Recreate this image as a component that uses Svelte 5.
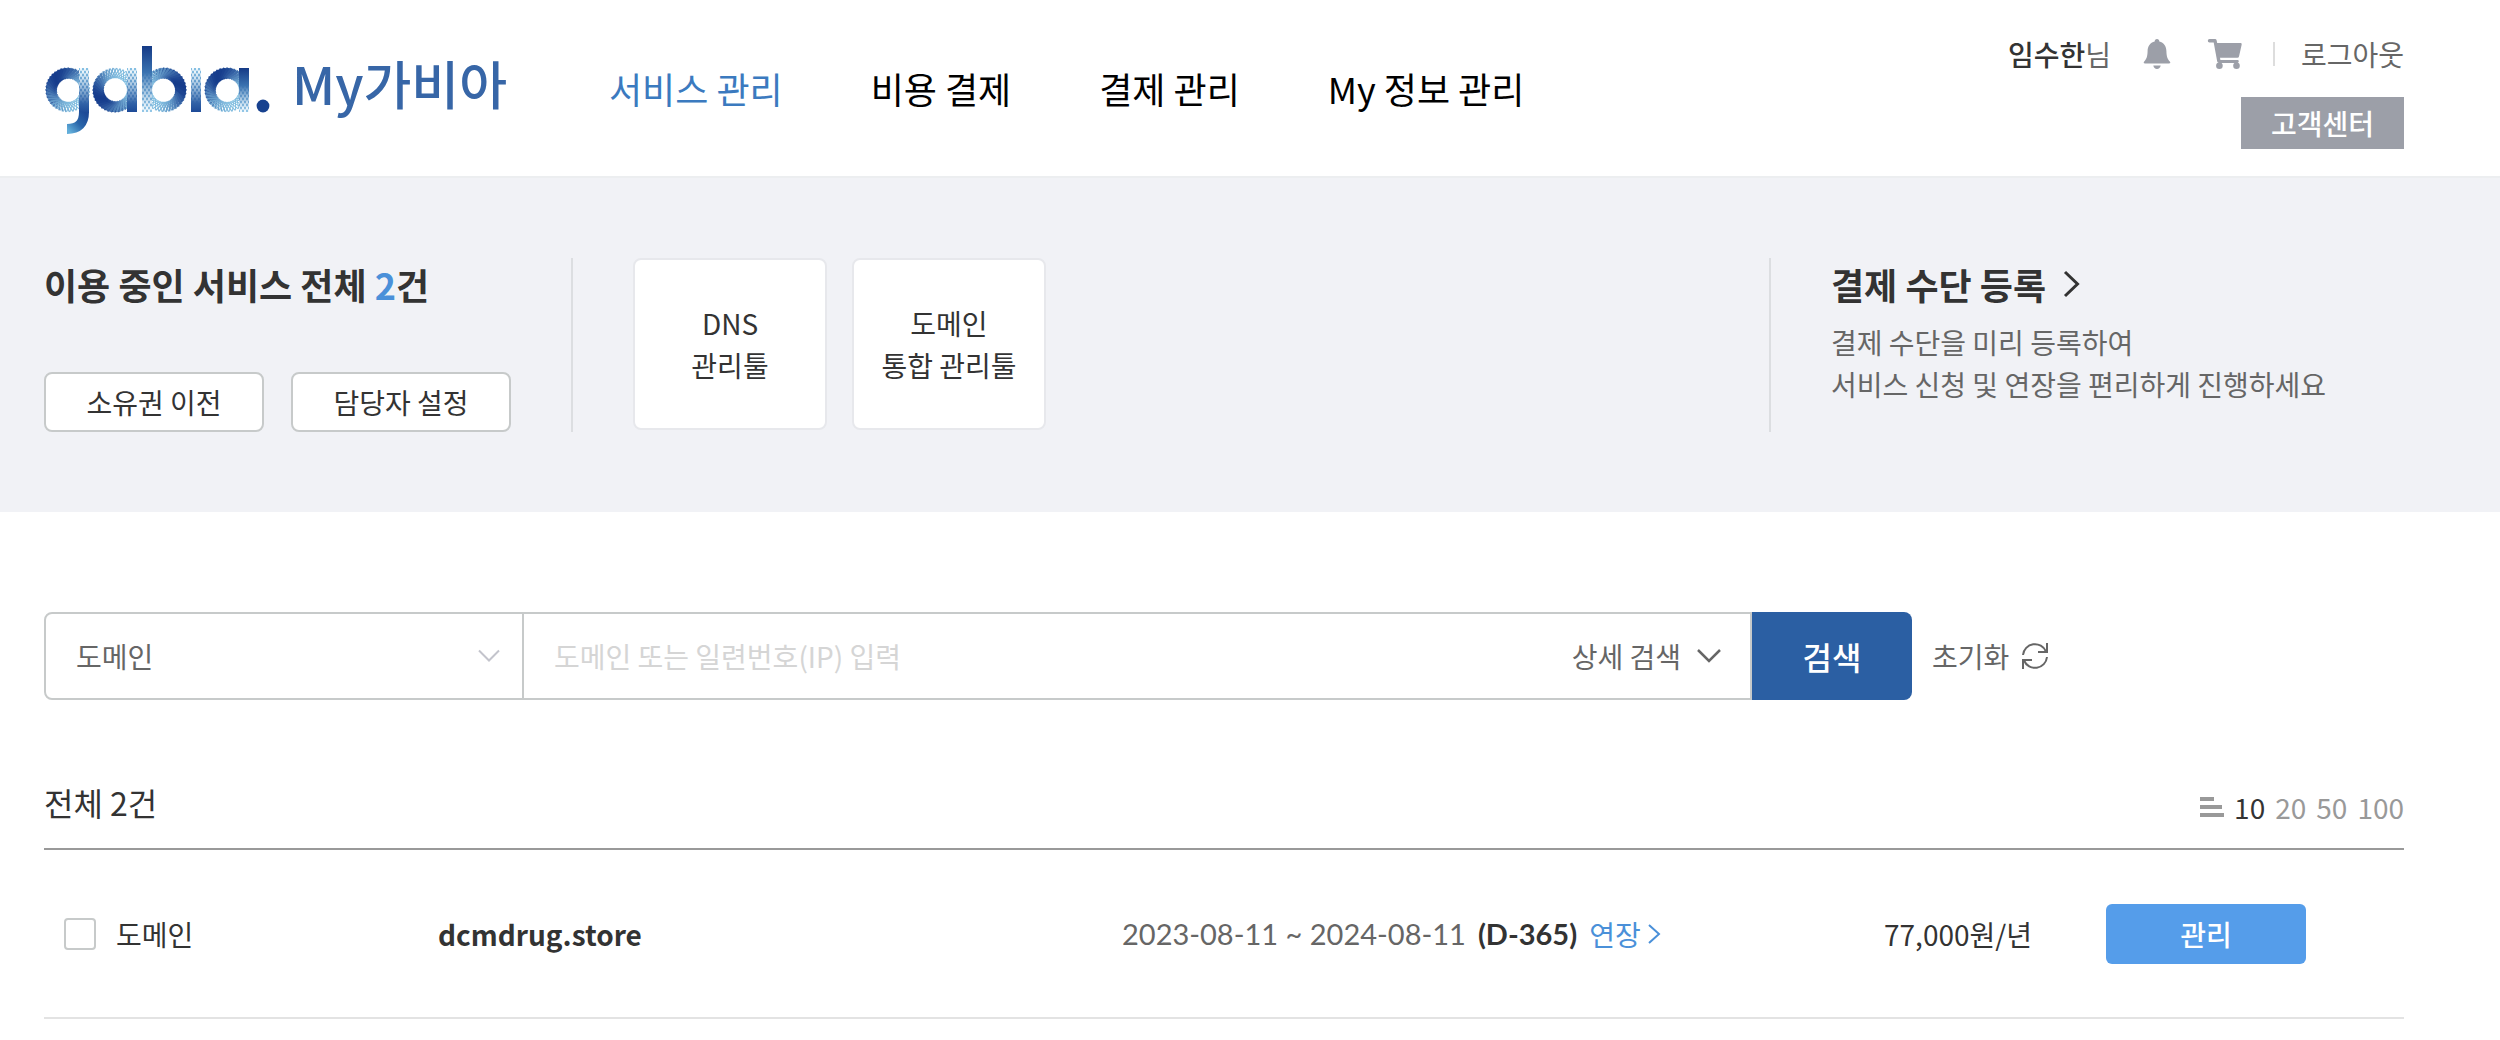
<script lang="ts">
  type Ring = { cx: number; dark: number };
  type Spoke = { x1: number; y1: number; x2: number; y2: number; w: number; color: string };

  const menus = ['서비스 관리', '비용 결제', '결제 관리', 'My 정보 관리'];
  const tools = [['DNS', '관리툴'], ['도메인', '통합 관리툴']];
  const sizes = [10, 20, 50, 100];
  const services = [
    { type: '도메인', name: 'dcmdrug.store', from: '2023-08-11', to: '2024-08-11', left: 'D-365', price: '77,000원/년' }
  ];

  let activeMenu = $state(0);
  let pageSize = $state(10);
  let category = $state('도메인');
  let keyword = $state('');

  // each ring is woven from twisted spokes, darkest at the `dark` angle
  const rings: Ring[] = [
    { cx: 69, dark: 215 },
    { cx: 116, dark: 140 },
    { cx: 165, dark: 330 },
    { cx: 228, dark: 225 }
  ];
  const bars = [
    { x: 80, y: 68, h: 45, up: false },
    { x: 128, y: 68, h: 44, up: false },
    { x: 143, y: 46, h: 66, up: true },
    { x: 192, y: 68, h: 44, up: false },
    { x: 240, y: 68, h: 44, up: true }
  ];
  const rad = Math.PI / 180;

  function weave({ cx, dark }: Ring): Spoke[] {
    const out: Spoke[] = [];
    for (const twist of [-22, 22]) {
      for (let a = 0; a < 360; a += 9) {
        const t = ((1 + Math.cos((a - dark) * rad)) / 2) ** 2;
        const mix = (d: number, l: number) => Math.round(l + (d - l) * t);
        out.push({
          x1: cx + 12 * Math.cos(a * rad),
          y1: 90 + 12 * Math.sin(a * rad),
          x2: cx + 22 * Math.cos((a + twist) * rad),
          y2: 90 + 22 * Math.sin((a + twist) * rad),
          w: 1 + t * 3,
          color: `rgb(${mix(22, 130)}, ${mix(60, 190)}, ${mix(140, 224)})`
        });
      }
    }
    return out;
  }
</script>

<header>
  <a class="brand" href="/">
    <svg width="226" height="90" viewBox="45 45 226 90" role="img" aria-label="gabia.">
      <defs>
        <linearGradient id="down" x1="0" y1="0" x2="0" y2="1">
          <stop offset="0" stop-color="#7dbde2" />
          <stop offset="1" stop-color="#1d4a97" />
        </linearGradient>
        <linearGradient id="up" x1="0" y1="0" x2="0" y2="1">
          <stop offset="0" stop-color="#153a86" />
          <stop offset="0.4" stop-color="#3a72b0" />
          <stop offset="1" stop-color="#8cc4e6" />
        </linearGradient>
        <linearGradient id="tail" x1="1" y1="0" x2="0" y2="1">
          <stop offset="0" stop-color="#1d4a97" />
          <stop offset="0.5" stop-color="#2a66aa" />
          <stop offset="1" stop-color="#62aeda" />
        </linearGradient>
        <linearGradient id="fade-down" x1="0" y1="0" x2="0" y2="1">
          <stop offset="0" stop-color="#fff" />
          <stop offset="0.8" stop-color="#000" />
        </linearGradient>
        <linearGradient id="fade-up" x1="0" y1="0" x2="0" y2="1">
          <stop offset="0.4" stop-color="#000" />
          <stop offset="1" stop-color="#fff" />
        </linearGradient>
        <pattern id="net" width="4" height="6" patternUnits="userSpaceOnUse">
          <path d="M0 0L4 6M4 0L0 6" stroke="#fff" stroke-width="1.2" />
        </pattern>
      </defs>
      {#each rings as ring}
        {#each weave(ring) as s}
          <line x1={s.x1} y1={s.y1} x2={s.x2} y2={s.y2} stroke={s.color} stroke-width={s.w} />
        {/each}
      {/each}
      {#each bars as b, i}
        <mask id="m{i}"><rect x={b.x} y={b.y} width="10" height={b.h} fill={b.up ? 'url(#fade-up)' : 'url(#fade-down)'} /></mask>
        <rect x={b.x} y={b.y} width="10" height={b.h} fill={b.up ? 'url(#up)' : 'url(#down)'} />
        <rect x={b.x} y={b.y} width="10" height={b.h} fill="url(#net)" mask="url(#m{i})" />
      {/each}
      <path d="M85 112Q85 129 68 129" fill="none" stroke="url(#tail)" stroke-width="10" />
      <circle cx="264" cy="106" r="6.4" fill="#17418f" />
    </svg>
    <span>My가비아</span>
  </a>

  <nav>
    {#each menus as menu, i}
      <a href="#menu-{i}" class:on={activeMenu === i} onclick={() => (activeMenu = i)}>{menu}</a>
    {/each}
  </nav>

  <div class="account">
    <div class="user">
      <span class="user-name"><b>임수한</b>님</span>
      <button class="icon bell" aria-label="알림">
        <svg width="28" height="32" viewBox="0 0 28 32" fill="#9c9fa8">
          <path d="M14 1c1.5 0 2.3 1 2.3 2.6C21 4.8 23.3 8.5 23.4 13c.1 6 1.400 8.300 3.400 10.500.9 1 .5 2-.8 2H2c-1.300 0-1.700-1-.8-2C3.200 21.300 4.500 19 4.600 13 4.700 8.500 7 4.800 11.700 3.600 11.700 2 12.500 1 14 1z" />
          <path d="M10.300 27.500h7.400c-.4 2.300-1.800 3.500-3.700 3.500s-3.300-1.200-3.700-3.500z" />
        </svg>
      </button>
      <button class="icon" aria-label="장바구니">
        <svg width="36" height="32" viewBox="0 0 36 32" fill="#9c9fa8">
          <path d="M2.500 1H8q1.300 0 1.600 1.300L10.200 5H33.500q1.400 0 1.200 1.400L32 18.500q-.3 1.300-1.600 1.300H13l.4 2.200h17.200q1.200 0 1.200 1.300T30.600 25H12q-1.500 0-1.800-1.400L6.700 4.400H2.500Q.8 4.400.8 2.700T2.500 1z" />
          <circle cx="12.400" cy="27.700" r="3.300" />
          <circle cx="29.500" cy="27.700" r="3.300" />
        </svg>
      </button>
      <i class="bar"></i>
      <a href="#logout">로그아웃</a>
    </div>
    <a class="center" href="#center">고객센터</a>
  </div>
</header>

<section class="summary">
  <div class="mine">
    <h2>이용 중인 서비스 전체 <em>2</em>건</h2>
    <div class="mine-actions">
      <button>소유권 이전</button>
      <button>담당자 설정</button>
    </div>
  </div>
  <div class="tools">
    {#each tools as [top, bottom]}
      <a href="#tool">{top}<br />{bottom}</a>
    {/each}
  </div>
  <div class="payment">
    <h2>
      <a href="#payment">결제 수단 등록
        <svg width="18" height="28" viewBox="0 0 18 28" fill="none" stroke="#333" stroke-width="3"><path d="M2 2l12.500 12L2 26" /></svg>
      </a>
    </h2>
    <p>결제 수단을 미리 등록하여<br />서비스 신청 및 연장을 편리하게 진행하세요</p>
  </div>
</section>

<main>
  <form onsubmit={(e) => e.preventDefault()}>
    <div class="search">
      <div class="category">
        <select aria-label="검색 구분" bind:value={category}>
          <option>도메인</option>
        </select>
        <svg width="22" height="14" viewBox="0 0 22 14" fill="none" stroke="#c3c4cc" stroke-width="2"><path d="M1 1.500l10 10 10-10" /></svg>
      </div>
      <input type="text" aria-label="검색어" placeholder="도메인 또는 일련번호(IP) 입력" bind:value={keyword} />
      <button type="button" class="detail">
        상세 검색
        <svg width="24" height="14" viewBox="0 0 24 14" fill="none" stroke="#666" stroke-width="2.500"><path d="M1 1l11 11L23 1" /></svg>
      </button>
      <button class="submit">검색</button>
    </div>
    <button type="reset" class="reset" onclick={() => (keyword = '')}>
      초기화
      <svg width="26" height="28" viewBox="0 0 26 28" fill="none" stroke="#666" stroke-width="2">
        <path d="M1 13A12 12 0 0 1 24 9.500M25 1v9h-9M25 15A12 12 0 0 1 2 18.500M1 27v-9h9" />
      </svg>
    </button>
  </form>

  <div class="list-head">
    <h3>전체 2건</h3>
    <div class="sizes">
      <svg width="24" height="20" viewBox="0 0 24 20" fill="#999"><path d="M0 0h14v4H0zM0 8h22v4H0zM0 16h24v4H0z" /></svg>
      {#each sizes as size}
        <button class:on={pageSize === size} onclick={() => (pageSize = size)}>{size}</button>
      {/each}
    </div>
  </div>

  <table>
    <tbody>
      {#each services as s}
        <tr>
          <td class="type"><label><input type="checkbox" />{s.type}</label></td>
          <td class="name">{s.name}</td>
          <td class="period">
            <div>
              <span>{s.from} ~ {s.to}</span>
              <b>({s.left})</b>
              <a href="#extend">연장<svg width="13" height="20" viewBox="0 0 13 20" fill="none" stroke="#4a90d9" stroke-width="2"><path d="M1 1l10 9-10 9" /></svg></a>
            </div>
          </td>
          <td class="price">{s.price}</td>
          <td class="manage"><button>관리</button></td>
        </tr>
      {/each}
    </tbody>
  </table>
</main>

<style>
  :global(body) {
    background: #fff;
    color: #333;
    font-family: 'Noto Sans CJK KR', 'Noto Sans', sans-serif;
    font-size: 28px;
    line-height: 42px;
  }
  a { color: inherit; text-decoration: none; }
  button, input, select { font: inherit; color: inherit; margin: 0; }
  button { padding: 0; border: 0; background: none; cursor: pointer; }
  svg { display: block; flex: none; }
  h2, h3, p { margin: 0; }

  header {
    display: flex;
    height: 176px;
    padding: 0 96px 0 44px;
    border-bottom: 2px solid #eceef0;
  }
  .brand { display: flex; align-items: center; gap: 22px; height: 180px; width: 565px; }
  .brand span {
    color: #3766a7;
    font-size: 52px;
    font-weight: 500;
    line-height: 60px;
    padding-bottom: 14px;
  }
  nav {
    display: flex;
    gap: 88px;
    align-items: center;
    color: #000;
    font-size: 36px;
  }
  nav .on { color: #3b7abf; }
  .account {
    display: flex;
    flex-direction: column;
    align-items: flex-end;
    margin-left: auto;
    padding-top: 33px;
    gap: 22px;
    color: #666;
  }
  .user { display: flex; align-items: center; }
  .user-name b { color: #333; font-weight: 500; }
  .icon { margin-left: 36px; }
  .bell { margin-left: 32px; }
  .bar { width: 2px; height: 24px; margin: 0 26px 0 30px; background: #ddd; }
  .center {
    width: 163px;
    background: #9c9fa8;
    color: #fff;
    font-weight: 500;
    line-height: 52px;
    text-align: center;
  }

  .summary {
    display: flex;
    padding: 80px 96px 80px 44px;
    background: #f1f2f6;
  }
  .summary > div { min-height: 174px; }
  h2 { font-size: 36px; line-height: 52px; font-weight: 700; }
  h2 em { color: #4a90d9; font-style: normal; }
  .mine {
    display: flex;
    flex-direction: column;
    justify-content: space-between;
    padding-right: 60px;
    border-right: 2px solid #dcdee1;
  }
  .mine-actions { display: flex; gap: 27px; }
  .mine-actions button {
    width: 220px;
    height: 60px;
    border: 2px solid #c7caca;
    border-radius: 8px;
    background: #fff;
  }
  .tools { display: flex; align-items: flex-start; gap: 25px; padding-left: 60px; }
  .tools a {
    display: flex;
    align-items: center;
    justify-content: center;
    box-sizing: border-box;
    width: 194px;
    height: 172px;
    border: 2px solid #e7e8ec;
    border-radius: 8px;
    background: #fff;
    text-align: center;
  }
  .payment {
    box-sizing: border-box;
    width: 635px;
    margin-left: auto;
    padding-left: 60px;
    border-left: 2px solid #dcdee1;
  }
  .payment h2 a { display: flex; align-items: center; gap: 17px; }
  .payment p { padding-top: 11px; color: #666; }

  main { padding: 100px 96px 0 44px; }
  form { display: flex; align-items: center; gap: 20px; }
  .search {
    display: flex;
    flex: 1;
    box-sizing: border-box;
    max-width: 1868px;
    height: 88px;
  }
  .search > :not(.submit) { box-sizing: border-box; border: 2px solid #c7caca; }
  .category {
    display: flex;
    align-items: center;
    width: 480px;
    padding-right: 22px;
    border-radius: 8px 0 0 8px;
    color: #666;
  }
  select {
    flex: 1;
    height: 84px;
    padding: 0 30px;
    border: 0;
    background: none;
    appearance: none;
  }
  .search > input {
    flex: 1;
    min-width: 0;
    padding: 0 30px;
    background: none;
  }
  .search > :not(.submit):nth-child(2) { border-left: 0; border-right: 0; }
  .search > :not(.submit):nth-child(3) { border-left: 0; }
  input::placeholder { color: #d5d5d5; opacity: 1; }
  .detail { display: flex; align-items: center; gap: 16px; padding-right: 29px; color: #666; }
  .submit {
    width: 160px;
    border-radius: 0 8px 8px 0;
    background: #2b5fa3;
    color: #fff;
    font-size: 32px;
    font-weight: 500;
  }
  .reset { display: flex; align-items: center; gap: 13px; color: #666; }

  .list-head {
    display: flex;
    align-items: flex-end;
    justify-content: space-between;
    padding: 76px 0 20px;
    border-bottom: 2px solid #999;
  }
  h3 { font-size: 32px; line-height: 52px; font-weight: 400; }
  .sizes { display: flex; align-items: center; gap: 10px; color: #999; }
  .sizes .on { color: #333; }

  table { width: 100%; border-collapse: collapse; table-layout: fixed; }
  td { height: 167px; padding: 0; border-bottom: 2px solid #e3e3e3; }
  .type { width: 394px; }
  .type label { display: flex; align-items: center; gap: 20px; padding-left: 20px; }
  .type input {
    box-sizing: border-box;
    width: 32px;
    height: 32px;
    border: 2px solid #c7caca;
    border-radius: 4px;
    appearance: none;
    background: #fff;
  }
  .name { font-weight: 700; }
  .period { width: 640px; color: #666; }
  .period div { display: flex; align-items: center; gap: 12px; }
  .period span, .period b { font-family: Lato, sans-serif; font-size: 29px; }
  .period b { color: #333; }
  .period a { display: flex; align-items: center; gap: 7px; color: #4a90d9; }
  .price { width: 270px; text-align: right; }
  .manage { width: 372px; }
  .manage button {
    display: block;
    width: 200px;
    height: 60px;
    margin-left: 74px;
    border-radius: 6px;
    background: #559dea;
    color: #fff;
    font-weight: 500;
  }
</style>
